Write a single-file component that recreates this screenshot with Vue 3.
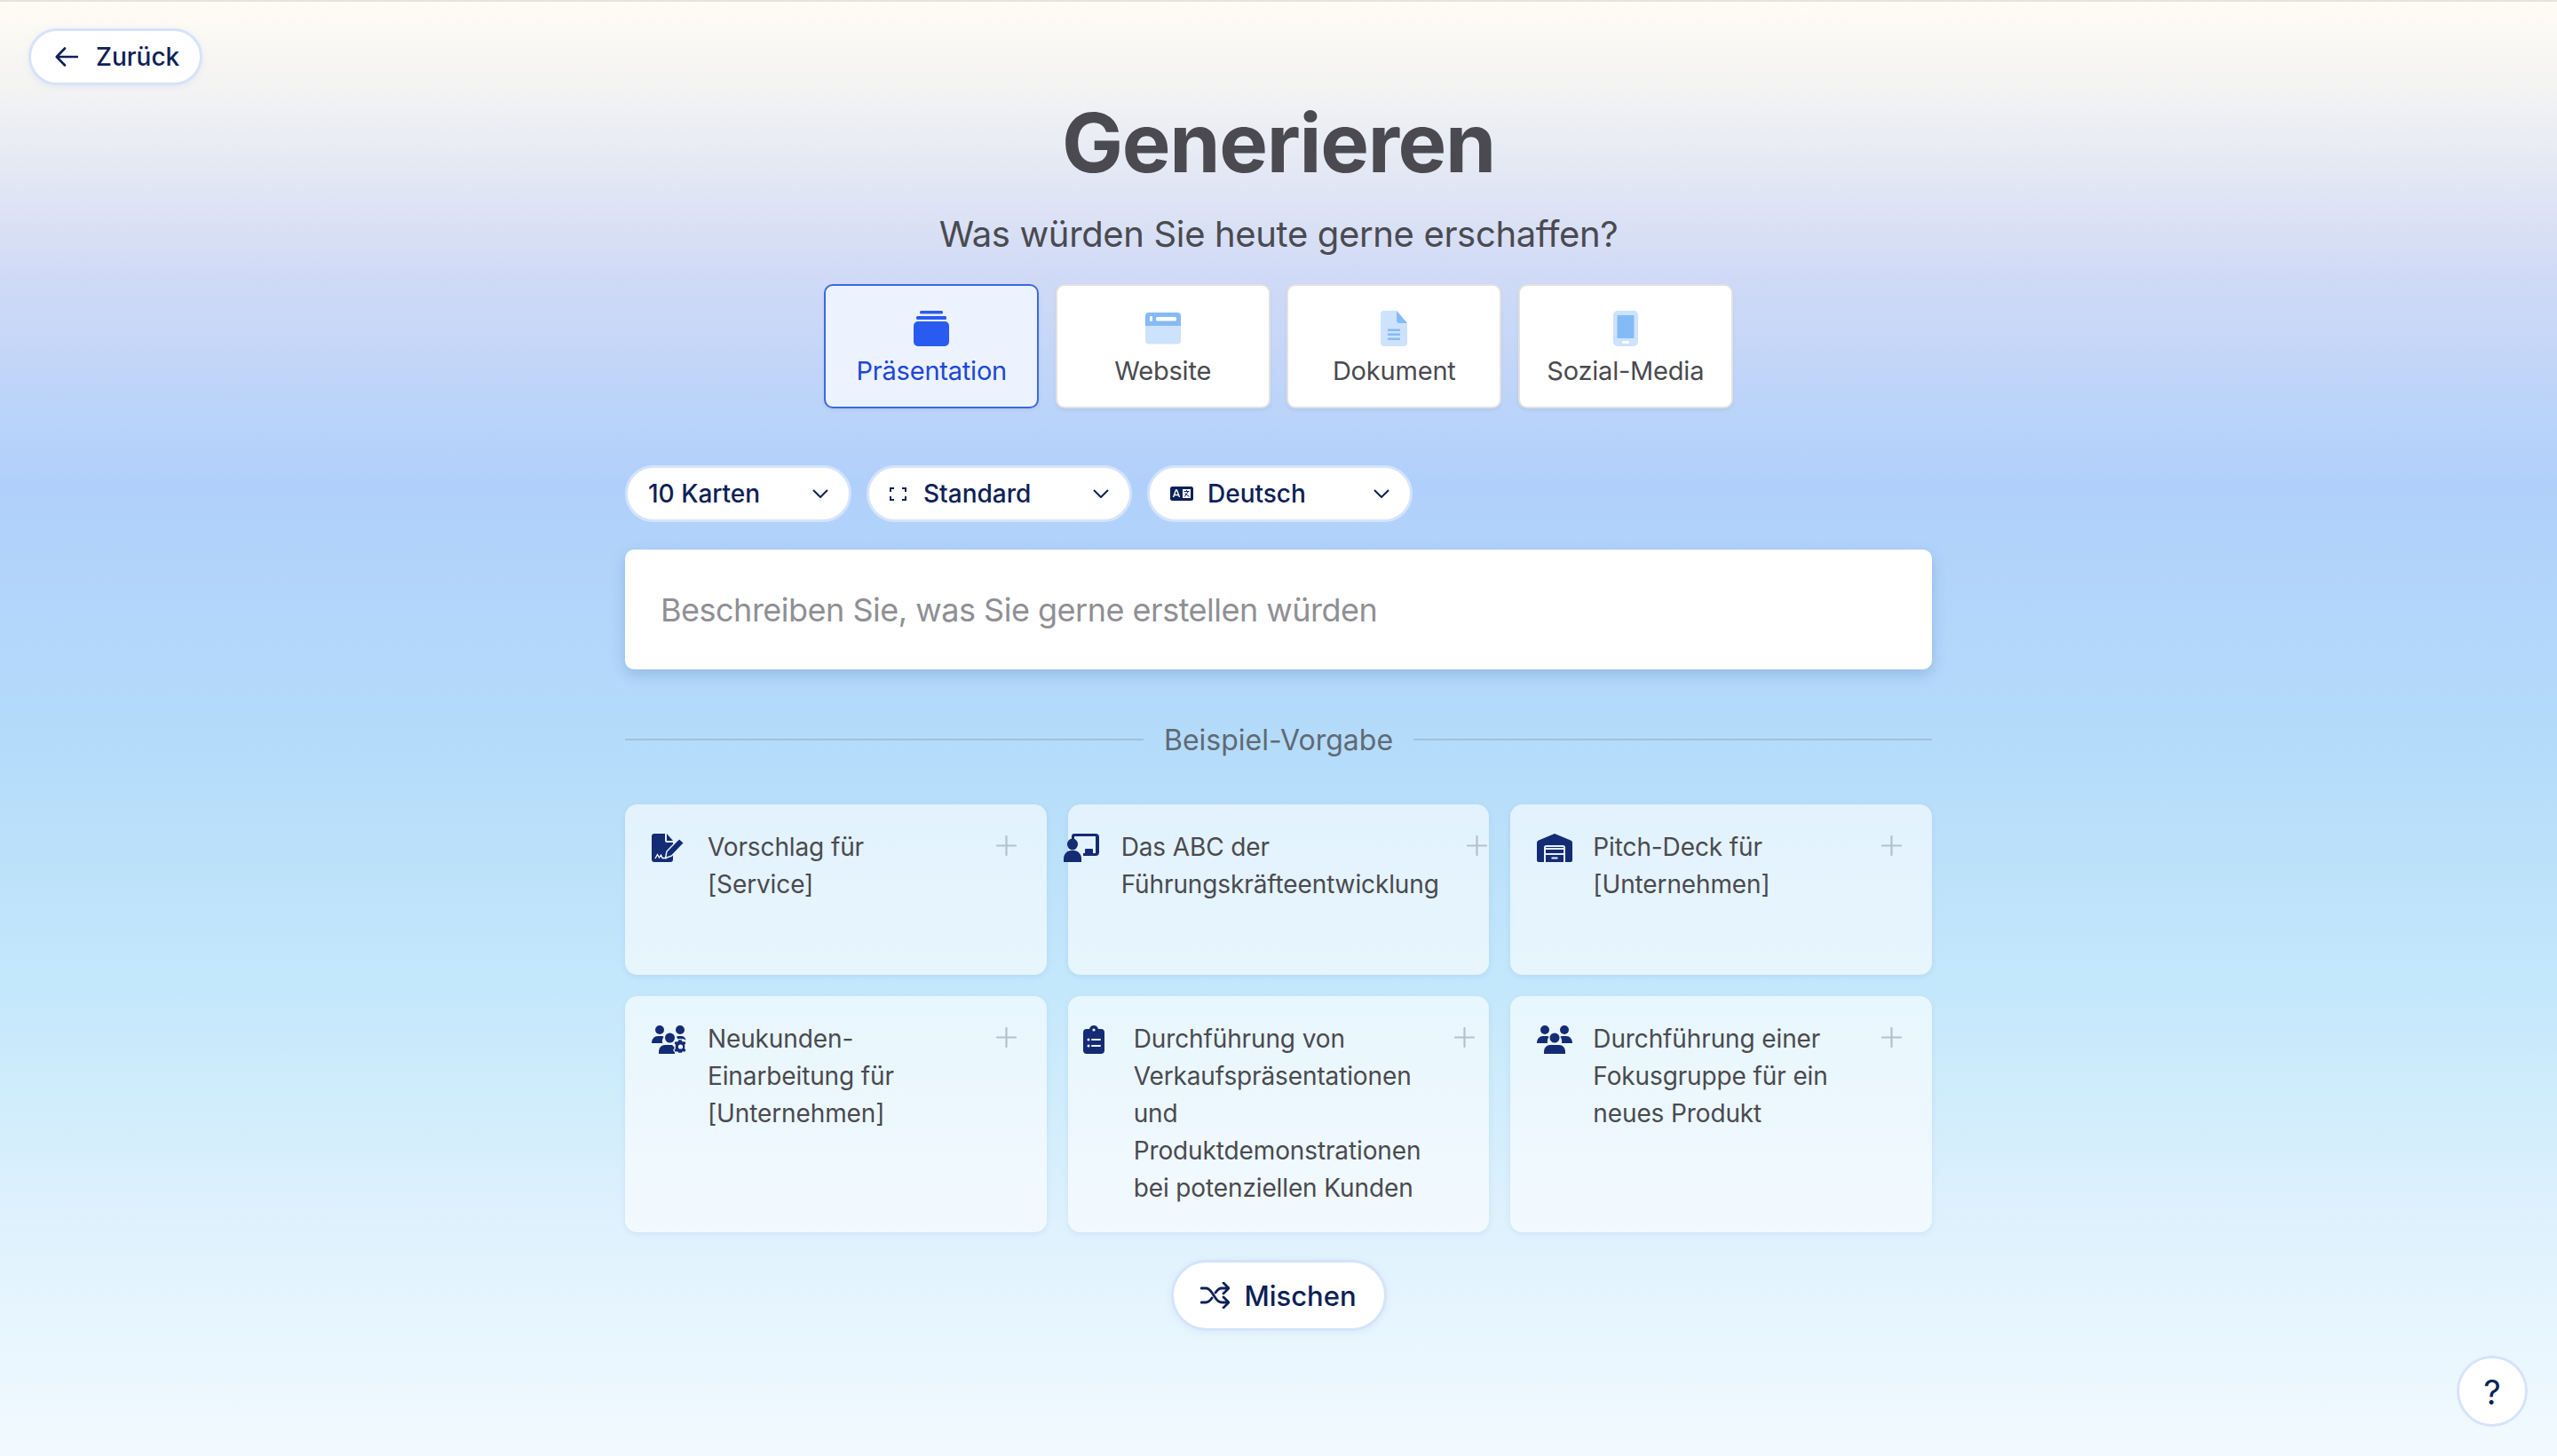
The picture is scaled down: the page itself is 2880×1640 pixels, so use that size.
<template>
  <div class="page">
    <div class="top-row">
      <button class="pill-btn back">
        <svg width="26" height="24" viewBox="0 0 26 24" fill="none" stroke="#0c2156" stroke-width="2.6" stroke-linecap="round" stroke-linejoin="round">
          <path d="M25 12H2M11 2.5 1.8 12l9.2 9.5" />
        </svg>
        <span>Zurück</span>
      </button>
    </div>

    <main class="main">
      <h1 class="title">Generieren</h1>
      <h2 class="subtitle">Was würden Sie heute gerne erschaffen?</h2>

      <div class="tabs">
        <div class="tab active">
          <svg width="40" height="40" viewBox="0 0 40 40" fill="#2a5bf0">
            <rect x="7" y="0" width="26" height="3.5" rx="1.5" />
            <rect x="3" y="6" width="34" height="4" rx="1.5" />
            <rect x="0" y="12" width="40" height="28" rx="5" />
          </svg>
          <span>Präsentation</span>
        </div>
        <div class="tab">
          <svg width="40" height="40" viewBox="0 0 40 40">
            <path d="M0 17h40v19a4 4 0 0 1-4 4H4a4 4 0 0 1-4-4z" fill="#cde2fc" transform="translate(0 -2.5)" />
            <path d="M4 2h32a4 4 0 0 1 4 4v11H0V6a4 4 0 0 1 4-4z" fill="#85bbf5" />
            <rect x="5" y="6" width="3" height="6" rx="1" fill="#fff" />
            <rect x="12" y="7" width="23" height="4.5" rx="1.5" fill="#fff" />
          </svg>
          <span>Website</span>
        </div>
        <div class="tab">
          <svg width="30" height="40" viewBox="0 0 30 40">
            <path d="M4 0h14l12 14v22a4 4 0 0 1-4 4H4a4 4 0 0 1-4-4V4a4 4 0 0 1 4-4z" fill="#cde2fc" />
            <path d="M18 0l12 14H21a3 3 0 0 1-3-3z" fill="#85bbf5" />
            <path d="M8 20.5h14v2.5H8zM8 25.5h14V28H8zM8 30.500h14V33H8z" fill="#85bbf5" />
          </svg>
          <span>Dokument</span>
        </div>
        <div class="tab">
          <svg width="28" height="40" viewBox="0 0 28 40">
            <rect width="28" height="40" rx="5" fill="#cde2fc" />
            <rect x="4.500" y="5" width="19" height="26" fill="#85bbf5" />
            <rect x="10" y="34" width="8" height="3" rx="1" fill="#fff" />
          </svg>
          <span>Sozial-Media</span>
        </div>
      </div>

      <div class="selects">
        <div class="select cards-select">
          <span>10 Karten</span>
          <svg class="chev" width="18" height="10" viewBox="0 0 18 10" fill="none" stroke="#0c2156" stroke-width="2"><path d="M1 1l8 8 8-8" /></svg>
        </div>
        <div class="select format-select">
          <svg class="sel-icon" width="19" height="15" viewBox="0 0 19 15" fill="none" stroke="#0c2156" stroke-width="2">
            <path d="M5 1H1v4M14 1h4v4M5 14H1v-4M14 14h4v-4" />
          </svg>
          <span>Standard</span>
          <svg class="chev" width="18" height="10" viewBox="0 0 18 10" fill="none" stroke="#0c2156" stroke-width="2"><path d="M1 1l8 8 8-8" /></svg>
        </div>
        <div class="select lang-select">
          <svg class="sel-icon" width="26" height="16" viewBox="0 0 26 16">
            <rect width="26" height="16" rx="2.500" fill="#0c2156" />
            <path d="M3.500 12 6.500 4h1l3 8M5 9.500h4" fill="none" stroke="#fff" stroke-width="1.400" />
            <rect x="14" y="3" width="9" height="10" fill="#fff" />
            <path d="M15.500 5.500h6M18.500 4v1.500M20.500 5.500 16 11.500M16.500 7.500l5 4" fill="none" stroke="#0c2156" stroke-width="1" />
          </svg>
          <span>Deutsch</span>
          <svg class="chev" width="18" height="10" viewBox="0 0 18 10" fill="none" stroke="#0c2156" stroke-width="2"><path d="M1 1l8 8 8-8" /></svg>
        </div>
      </div>

      <div class="prompt">Beschreiben Sie, was Sie gerne erstellen würden</div>

      <div class="divider">
        <span class="line"></span>
        <span class="divider-text">Beispiel-Vorgabe</span>
        <span class="line"></span>
      </div>

      <div class="grid">
        <div v-for="item in examples" :key="item.id" class="card" :class="item.variant">
          <span class="icon-slot">
            <svg v-if="item.id === 1" width="37" height="32" viewBox="0 0 37 32">
              <path d="M3 0h12v8a2 2 0 0 0 2 2h7v19a3 3 0 0 1-3 3H3a3 3 0 0 1-3-3V3a3 3 0 0 1 3-3z" fill="#142c74" />
              <path d="M17 0l7 8h-7z" fill="#142c74" />
              <path d="M31 5.500l5.500 5L22.500 25l-7 2.500 1.500-7.500z" fill="#142c74" stroke="#e4f3fe" stroke-width="1.500" stroke-linejoin="round" />
              <path d="M4 28l2.500-4.500 2 3.500 2-3 1.500 3.500h5" fill="none" stroke="#fff" stroke-width="1.300" />
            </svg>
            <svg v-else-if="item.id === 2" width="40" height="32" viewBox="0 0 40 32" fill="#142c74">
              <path d="M12 0h24a4 4 0 0 1 4 4v17a4 4 0 0 1-4 4H22v-3h14V3H12v3H9V3a3 3 0 0 1 3-3z" />
              <rect x="24" y="17" width="9" height="8" rx="1" />
              <ellipse cx="10" cy="12" rx="6" ry="6.500" />
              <path d="M0 32v-4c0-5 4-9 8-9h4c4 0 8 4 8 9v4z" />
            </svg>
            <svg v-else-if="item.id === 3" width="40" height="32" viewBox="0 0 40 32">
              <path d="M20 0l18 7.500c1.300.6 2 1.500 2 3V30a2 2 0 0 1-2 2H2a2 2 0 0 1-2-2V10.500c0-1.500.700-2.400 2-3z" fill="#142c74" />
              <path d="M9 32V17h22v15M9 23h22M16.500 27.500h7" fill="none" stroke="#e4f3fe" stroke-width="2" />
              <path d="M9 17v-1.500a1.500 1.500 0 0 1 1.500-1.500h19a1.500 1.500 0 0 1 1.500 1.500V17" fill="none" stroke="#e4f3fe" stroke-width="2" />
            </svg>
            <svg v-else-if="item.id === 4" width="40" height="32" viewBox="0 0 40 32" fill="#142c74">
              <ellipse cx="9" cy="5" rx="5" ry="5" />
              <ellipse cx="32" cy="5" rx="5" ry="5" />
              <path d="M0 20c0-5 3-8 7-8h4c1 0 2 .300 2.500 1-1.500 2-2 4-1.500 7z" />
              <path d="M28 13c.5-.7 1.500-1 2.500-1h3c2.500 0 4.500 2 5 4.500L35 15l-4 3z" />
              <ellipse cx="20.500" cy="14" rx="5.500" ry="5.500" />
              <path d="M8 32v-2c0-5 3-8 7-8h8l3 3v7z" />
              <path d="M31.500 15.500l2.800.6.7 1.800 2.500-.5 1.700 2.700-1.500 1.800.3 2-.3 2 1.500 1.800-1.700 2.700-2.500-.5-.7 1.500h-4.600l-.7-1.500-2.500.5-1.700-2.700 1.500-1.800-.3-2 .3-2-1.500-1.800 1.700-2.700 2.500.5.700-1.800z" stroke="#eef8fe" stroke-width="1.200" />
              <circle cx="32.500" cy="24" r="2.600" fill="#eef8fe" />
            </svg>
            <svg v-else-if="item.id === 5" width="24" height="32" viewBox="0 0 24 32" fill="#142c74">
              <path d="M12 0c2.500 0 4.400 1.600 5 4h3a4 4 0 0 1 4 4v20a4 4 0 0 1-4 4H4a4 4 0 0 1-4-4V8a4 4 0 0 1 4-4h3c.6-2.400 2.500-4 5-4z" />
              <circle cx="12" cy="5" r="1.600" fill="#eef8fe" />
              <circle cx="6" cy="16" r="1.500" fill="#eef8fe" />
              <circle cx="6" cy="23" r="1.500" fill="#eef8fe" />
              <path d="M10 16h9M10 23h9" stroke="#eef8fe" stroke-width="2" stroke-linecap="round" />
            </svg>
            <svg v-else width="40" height="32" viewBox="0 0 40 32" fill="#142c74">
              <ellipse cx="9" cy="5" rx="5" ry="5" />
              <ellipse cx="31" cy="5" rx="5" ry="5" />
              <path d="M0 20c0-5 3-8 7-8h4c1 0 2 .300 2.500 1-1.500 2-2 4-1.500 7z" />
              <path d="M40 20c0-5-3-8-7-8h-4c-1 0-2 .300-2.500 1 1.500 2 2 4 1.500 7z" />
              <ellipse cx="20" cy="14" rx="5.500" ry="5.500" />
              <path d="M8 32v-2c0-5 3-8 7-8h10c4 0 7 3 7 8v2z" />
            </svg>
          </span>
          <p class="card-text">{{ item.text }}</p>
          <svg class="plus" width="23" height="23" viewBox="0 0 23 23" stroke="#b4c1cb" stroke-width="2.200" stroke-linecap="round">
            <path d="M11.500 1v21M1 11.500h21" />
          </svg>
        </div>
      </div>

      <button class="pill-btn shuffle">
        <svg width="33" height="30" viewBox="0 0 33 30" fill="none" stroke="#0c2156" stroke-width="2.800" stroke-linecap="round" stroke-linejoin="round">
          <path d="M1 7h5c3 0 5 2 7 5l4 6c2 3 4 5 7 5h7M1 23h5c3 0 5-2 7-5M17 12c2-3 4-5 7-5h7M26 1l6 6-6 6M26 17l6 6-6 6" />
        </svg>
        <span>Mischen</span>
      </button>
    </main>

    <button class="help">?</button>
  </div>
</template>

<script setup>
const examples = [
  { id: 1, text: "Vorschlag für [Service]", variant: "" },
  { id: 2, text: "Das ABC der Führungskräfteentwicklung", variant: "tight" },
  { id: 3, text: "Pitch-Deck für [Unternehmen]", variant: "" },
  { id: 4, text: "Neukunden-Einarbeitung für [Unternehmen]", variant: "" },
  { id: 5, text: "Durchführung von Verkaufspräsentationen und Produktdemonstrationen bei potenziellen Kunden", variant: "medium" },
  { id: 6, text: "Durchführung einer Fokusgruppe für ein neues Produkt", variant: "" },
];
</script>

<style>
html,
body {
  margin: 0;
  padding: 0;
}
</style>

<style scoped>
.page {
  position: relative;
  width: 2880px;
  height: 1640px;
  overflow: hidden;
  box-sizing: border-box;
  padding-top: 32px;
  border-top: 2px solid #e6e3da;
  font-family: Inter, "Noto Sans", sans-serif;
  background: linear-gradient(180deg, #fffcf4 0%, #f3f3f3 6%, #d0daf6 19%, #b0d0fb 33%, #b5dcfa 52%, #c4e8fb 68%, #e0f2fd 85%, #f2faff 100%);
}
.top-row {
  padding-left: 32px;
  margin-top: -2px;
}
.pill-btn {
  display: inline-flex;
  align-items: center;
  box-sizing: border-box;
  background: #fff;
  border: 3px solid #d5e3fb;
  border-radius: 40px;
  font-family: inherit;
  font-weight: 500;
  color: #0c2156;
  box-shadow: 0 2px 8px rgba(60, 100, 180, 0.08);
}
.back {
  width: 196px;
  height: 64px;
  padding: 0 0 0 27px;
  gap: 20px;
  font-size: 28px;
}
.main {
  display: flex;
  flex-direction: column;
  align-items: center;
  width: 1472px;
  margin: 0 auto;
}
.title {
  margin: 15px 0 0;
  height: 100px;
  line-height: 100px;
  font-size: 92px;
  font-weight: 700;
  letter-spacing: -1.3px;
  color: #4a4a50;
}
.subtitle {
  margin: 29px 0 0;
  height: 48px;
  line-height: 48px;
  font-size: 40px;
  font-weight: 400;
  letter-spacing: -0.35px;
  color: #4a4a50;
}
.tabs {
  display: flex;
  gap: 18.5px;
  margin-top: 32px;
}
.tab {
  display: flex;
  flex-direction: column;
  align-items: center;
  box-sizing: border-box;
  width: 242px;
  height: 140px;
  padding-top: 28px;
  background: #fff;
  border: 2px solid #e2e2e2;
  border-radius: 10px;
  font-size: 29px;
  letter-spacing: -0.2px;
  color: #4a4a50;
  box-shadow: 0 2px 4px rgba(0, 0, 0, 0.06);
}
.tab span {
  margin-top: 9px;
  line-height: 38px;
}
.tab.active {
  background: #ecf3fe;
  border-color: #3a6ae0;
  color: #2046d8;
}
.selects {
  display: flex;
  align-self: flex-start;
  gap: 17px;
  margin-top: 64px;
}
.select {
  display: flex;
  align-items: center;
  box-sizing: border-box;
  height: 64px;
  padding: 0 23px;
  background: #fff;
  border: 3px solid #d5e3fb;
  border-radius: 32px;
  font-size: 28px;
  font-weight: 500;
  color: #0c2156;
}
.cards-select {
  width: 255px;
}
.format-select {
  width: 299px;
}
.lang-select {
  width: 299px;
}
.sel-icon {
  margin-right: 16px;
  flex: none;
}
.format-select .sel-icon {
  margin-right: 19px;
}
.chev {
  margin-left: auto;
  flex: none;
}
.prompt {
  align-self: stretch;
  height: 135px;
  margin-top: 31px;
  padding-left: 40px;
  line-height: 137px;
  background: #fff;
  border-radius: 10px;
  font-size: 36px;
  letter-spacing: -0.5px;
  color: #8f8f95;
  box-shadow: 0 6px 16px rgba(40, 80, 140, 0.22);
}
.divider {
  display: flex;
  align-items: center;
  align-self: stretch;
  gap: 23px;
  margin-top: 57px;
  height: 44px;
}
.line {
  flex: 1;
  height: 2px;
  background: #a3c0da;
}
.divider-text {
  font-size: 32px;
  color: #5f6a75;
}
.grid {
  display: grid;
  grid-template-columns: repeat(3, 1fr);
  grid-template-rows: 192px 266px;
  gap: 24px;
  align-self: stretch;
  margin-top: 51px;
}
.card {
  display: flex;
  align-items: flex-start;
  box-sizing: border-box;
  padding: 27px 34px 0 30px;
  background: rgba(255, 255, 255, 0.6);
  border-radius: 14px;
  box-shadow: 0 2px 6px rgba(60, 110, 170, 0.1);
}
.icon-slot {
  display: flex;
  flex: none;
  width: 63px;
  padding-top: 6px;
}
.card-text {
  flex: 1;
  margin: 0;
  font-size: 28px;
  line-height: 42px;
  letter-spacing: -0.12px;
  color: #4a4a50;
  max-width: 290px;
}
.plus {
  flex: none;
  margin-top: 8px;
  margin-left: auto;
}
.tight {
  padding-left: 0;
  padding-right: 2px;
}
.tight .icon-slot {
  width: 60px;
  margin-left: -5px;
  margin-right: 5px;
}
.tight .card-text,
.medium .card-text {
  max-width: none;
}
.medium {
  padding-left: 17px;
  padding-right: 16px;
}
.medium .icon-slot {
  width: 57px;
}
.shuffle {
  width: 243px;
  height: 80px;
  justify-content: center;
  gap: 16px;
  margin-top: 31px;
  font-size: 31px;
}
.help {
  position: absolute;
  right: 33px;
  bottom: 33px;
  width: 80px;
  height: 80px;
  padding: 2px 0 0;
  background: #fff;
  border: 3px solid #d5e3fb;
  border-radius: 50%;
  font-family: inherit;
  font-size: 38px;
  color: #0c2156;
}
</style>
